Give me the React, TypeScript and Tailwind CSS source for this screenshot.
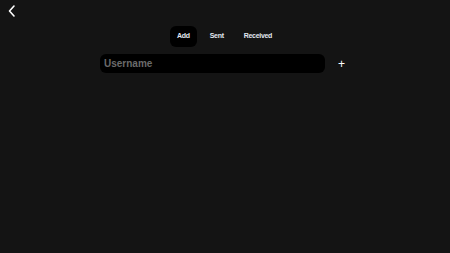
import React from "react";

export default function App() {
  return (
    <div className="w-[450px] h-[253px] bg-[#141414] relative font-['Liberation_Sans',Arial,sans-serif]">
      <button className="absolute left-[6px] top-[4px] text-white" title="back">
        <svg width="12" height="14" viewBox="0 0 12 14" fill="none">
          <path d="M8 2L3.5 7L8 12" stroke="#fff" strokeWidth="1.6" strokeLinecap="round" strokeLinejoin="round" />
        </svg>
      </button>
      <div className="flex pt-[26px] pl-[170px] gap-[6px]">
        <div className="bg-black rounded-md px-[7px] h-[21px] flex items-center text-[7px] tracking-[-0.3px] font-bold text-[#e2e8f0]">Add</div>
        <div className="px-[7px] h-[21px] flex items-center text-[7px] tracking-[-0.3px] font-bold text-[#e2e8f0]">Sent</div>
        <div className="px-[7px] h-[21px] flex items-center text-[7px] tracking-[-0.3px] font-bold text-[#e2e8f0]">Received</div>
      </div>
      <div className="flex items-center pl-[100px] mt-[7px]">
        <input
          placeholder="Username"
          className="w-[225px] h-[19px] bg-black rounded-md px-[4px] text-[10px] font-bold text-white placeholder:text-[#6b6b6b] outline-none"
        />
        <span className="ml-[13px] text-white text-[12px] leading-none">+</span>
      </div>
    </div>
  );
}
